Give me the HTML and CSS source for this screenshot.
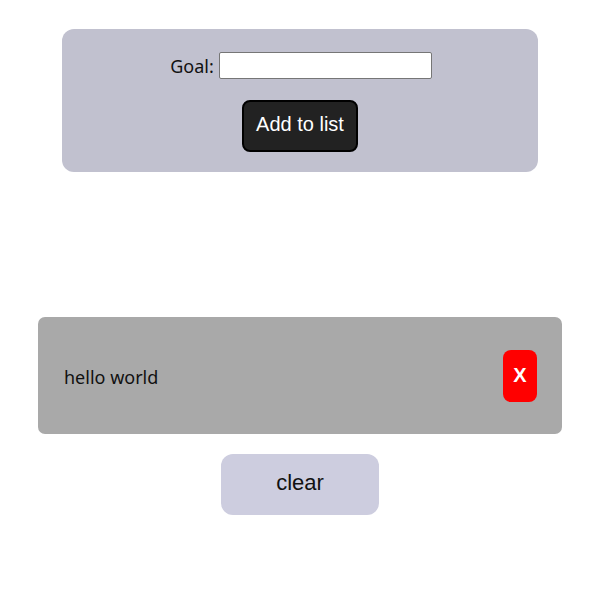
FILE: index.html
```html
<!DOCTYPE html>
<html>
<head>
<meta charset="utf-8">
<link rel="stylesheet" href="styles.css">
</head>
<body>
<div class="page">
  <form class="goal-form">
    <div class="field">
      <label class="label" for="goal">Goal:</label>
      <input class="input" id="goal" type="text">
    </div>
    <button class="add-btn" type="button">Add to list</button>
  </form>
  <ul class="list">
    <li class="item">
      <span class="item-text">hello world</span>
      <button class="del-btn" type="button">X</button>
    </li>
  </ul>
  <button class="clear-btn" type="button">clear</button>
</div>
</body>
</html>
```
FILE: styles.css
```css
html, body {
  margin: 0;
  padding: 0;
  background: #ffffff;
}
.page {
  display: flex;
  flex-direction: column;
  align-items: center;
  padding: 29px 4px 0 0;
  font-family: "Noto Sans", "Open Sans", sans-serif;
}
.goal-form {
  box-sizing: border-box;
  width: 476px;
  height: 143px;
  background: #c1c1cf;
  border-radius: 12px;
  display: flex;
  flex-direction: column;
  align-items: center;
  padding-top: 23px;
  margin: 0;
}
.field {
  display: flex;
  align-items: center;
  gap: 5px;
  height: 27px;
  padding-left: 2px;
}
.label {
  font-size: 18px;
  color: #111;
}
.input {
  box-sizing: border-box;
  width: 213px;
  height: 27px;
  border: 1px solid #767676;
  border-radius: 2px;
  background: #fff;
  margin: 0;
}
.add-btn {
  margin-top: 21px;
  box-sizing: border-box;
  width: 116px;
  height: 52px;
  background: #222222;
  color: #ffffff;
  border: 2px solid #000;
  border-radius: 8px;
  font-family: "Liberation Sans", Arial, sans-serif;
  font-size: 20px;
  padding: 0 0 3px 0;
}
.list {
  list-style: none;
  margin: 145px 0 0 0;
  padding: 0;
}
.item {
  box-sizing: border-box;
  width: 524px;
  height: 117px;
  background: #a9a9a9;
  border-radius: 7px;
  display: flex;
  align-items: center;
  justify-content: space-between;
  padding: 0 25px 0 26px;
}
.item-text {
  font-size: 18px;
  color: #111;
  padding-top: 3px;
}
.del-btn {
  width: 34px;
  height: 52px;
  background: #ff0000;
  color: #fff;
  border: none;
  border-radius: 8px;
  font-family: "Liberation Sans", Arial, sans-serif;
  font-weight: bold;
  font-size: 20px;
  padding: 0;
}
.clear-btn {
  margin-top: 20px;
  width: 158px;
  height: 61px;
  background: #cdcddf;
  color: #111;
  border: none;
  border-radius: 12px;
  font-family: "Liberation Sans", Arial, sans-serif;
  font-size: 22px;
  padding: 0 0 3px 0;
}
```
